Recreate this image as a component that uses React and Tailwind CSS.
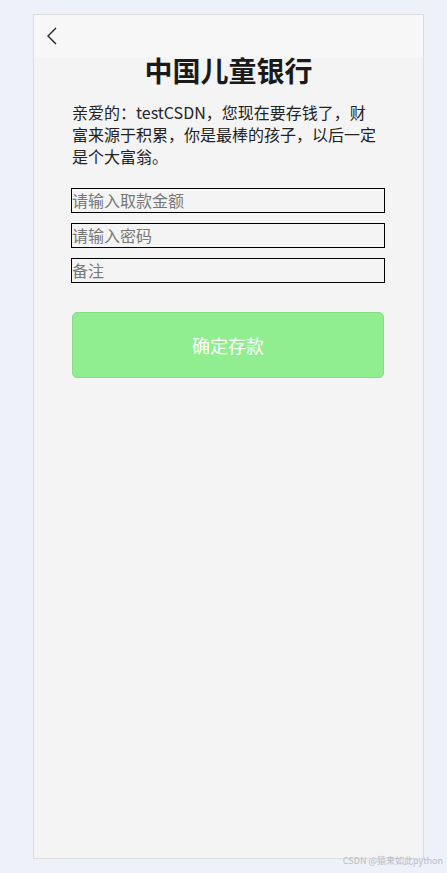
export default function App() {
  return (
    <div
      className="min-h-[873px] w-[447px] bg-[#edf1f9] pt-[14px] pl-[33px] relative"
      style={{ fontFamily: '"Noto Sans CJK SC", "Liberation Sans", sans-serif' }}
    >
      <div className="w-[391px] h-[845px] border border-[#dcdcdc] bg-[#f4f4f4] flex flex-col">
        <div className="h-[42px] bg-[#f7f7f7] flex items-center pl-[11px]">
          <svg width="14" height="18" viewBox="0 0 14 18" fill="none">
            <path d="M11 1 L3 9 L11 17" stroke="#222" strokeWidth="1.4" />
          </svg>
        </div>
        <h1 className="text-[28px] font-bold text-[#1a1a1a] text-center leading-[28px] mt-[-1px]">中国儿童银行</h1>
        <p className="ml-[38px] w-[306px] mt-[17px] text-[16px] leading-[22px] text-[#222]">
          亲爱的：testCSDN，您现在要存钱了，财富来源于积累，你是最棒的孩子，以后一定是个大富翁。
        </p>
        <div className="ml-[37px] mr-[38px] mt-[21px] flex flex-col gap-[10.5px]">
          <input
            className="h-[24.5px] border border-black bg-transparent px-0 text-[16px] placeholder:text-[#777] outline-none"
            placeholder="请输入取款金额"
          />
          <input
            className="h-[24.5px] border border-black bg-transparent px-0 text-[16px] placeholder:text-[#777] outline-none"
            placeholder="请输入密码"
          />
          <input
            className="h-[24.5px] border border-black bg-transparent px-0 text-[16px] placeholder:text-[#777] outline-none"
            placeholder="备注"
          />
        </div>
        <button className="ml-[38px] mr-[39px] mt-[29.5px] h-[66px] rounded-[5px] bg-[#90ee90] border border-[#83dd83] text-white text-[18px]">
          确定存款
        </button>
      </div>
      <div className="absolute right-[4px] top-[854px] text-[9px] text-[#b8bcc4]">CSDN @猿来如此python</div>
    </div>
  );
}
